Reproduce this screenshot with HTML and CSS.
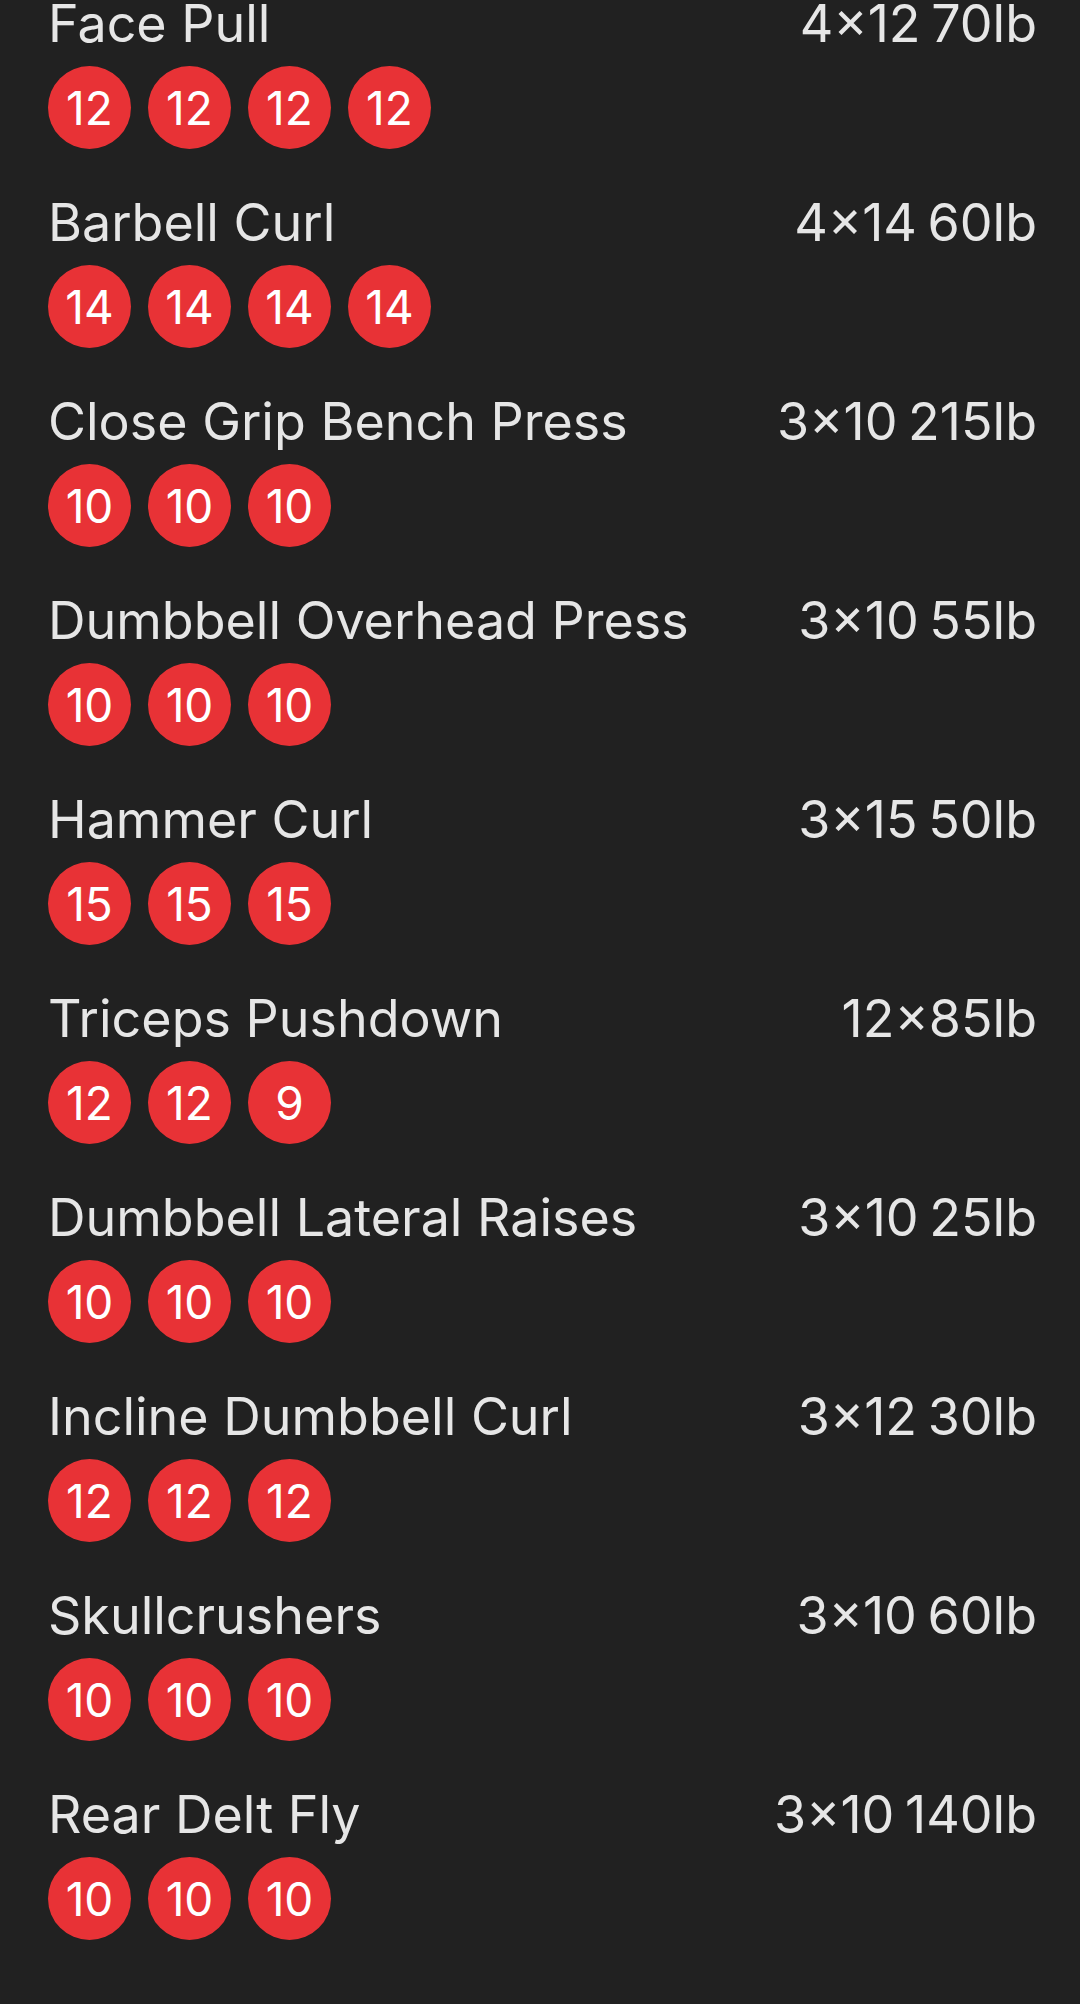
FILE: index.html
```html
<!DOCTYPE html>
<html lang="en">
<head>
  <meta charset="UTF-8" />
  <meta name="viewport" content="width=device-width, initial-scale=1.0"/>
  <title>Workout</title>
  <link rel="stylesheet" href="styles.css">
</head>
<body>
  <div class="workout">
    <div class="exercise">
      <div class="exercise-head"><span class="name">Face Pull</span><span class="scheme">4×12 70lb</span></div>
      <div class="sets"><span class="set">12</span><span class="set">12</span><span class="set">12</span><span class="set">12</span></div>
    </div>
    <div class="exercise">
      <div class="exercise-head"><span class="name">Barbell Curl</span><span class="scheme">4×14 60lb</span></div>
      <div class="sets"><span class="set">14</span><span class="set">14</span><span class="set">14</span><span class="set">14</span></div>
    </div>
    <div class="exercise">
      <div class="exercise-head"><span class="name">Close Grip Bench Press</span><span class="scheme">3×10 215lb</span></div>
      <div class="sets"><span class="set">10</span><span class="set">10</span><span class="set">10</span></div>
    </div>
    <div class="exercise">
      <div class="exercise-head"><span class="name">Dumbbell Overhead Press</span><span class="scheme">3×10 55lb</span></div>
      <div class="sets"><span class="set">10</span><span class="set">10</span><span class="set">10</span></div>
    </div>
    <div class="exercise">
      <div class="exercise-head"><span class="name">Hammer Curl</span><span class="scheme">3×15 50lb</span></div>
      <div class="sets"><span class="set">15</span><span class="set">15</span><span class="set">15</span></div>
    </div>
    <div class="exercise">
      <div class="exercise-head"><span class="name">Triceps Pushdown</span><span class="scheme">12×85lb</span></div>
      <div class="sets"><span class="set">12</span><span class="set">12</span><span class="set">9</span></div>
    </div>
    <div class="exercise">
      <div class="exercise-head"><span class="name">Dumbbell Lateral Raises</span><span class="scheme">3×10 25lb</span></div>
      <div class="sets"><span class="set">10</span><span class="set">10</span><span class="set">10</span></div>
    </div>
    <div class="exercise">
      <div class="exercise-head"><span class="name">Incline Dumbbell Curl</span><span class="scheme">3×12 30lb</span></div>
      <div class="sets"><span class="set">12</span><span class="set">12</span><span class="set">12</span></div>
    </div>
    <div class="exercise">
      <div class="exercise-head"><span class="name">Skullcrushers</span><span class="scheme">3×10 60lb</span></div>
      <div class="sets"><span class="set">10</span><span class="set">10</span><span class="set">10</span></div>
    </div>
    <div class="exercise">
      <div class="exercise-head"><span class="name">Rear Delt Fly</span><span class="scheme">3×10 140lb</span></div>
      <div class="sets"><span class="set">10</span><span class="set">10</span><span class="set">10</span></div>
    </div>
  </div>
</body>
</html>
```

FILE: styles.css
```css
* {
  box-sizing: border-box;
  margin: 0;
  padding: 0;
}

body {
  font-family: Inter, 'Liberation Sans', sans-serif;
  background: #212121;
  color: #e6e6e6;
  min-height: 100vh;
}

.workout {
  display: flex;
  flex-direction: column;
  gap: 44px;
  margin-top: -6px;
  padding: 0 43px 0 48px;
}

.exercise-head {
  display: flex;
  justify-content: space-between;
  align-items: baseline;
  font-size: 52px;
  line-height: 60px;
}

.scheme {
  word-spacing: -4px;
}

.sets {
  display: flex;
  gap: 17px;
  margin-top: 12px;
}

.set {
  width: 83px;
  height: 83px;
  border-radius: 50%;
  background: #e83236;
  color: #fff;
  font-size: 46px;
  display: flex;
  align-items: center;
  justify-content: center;
}
```
